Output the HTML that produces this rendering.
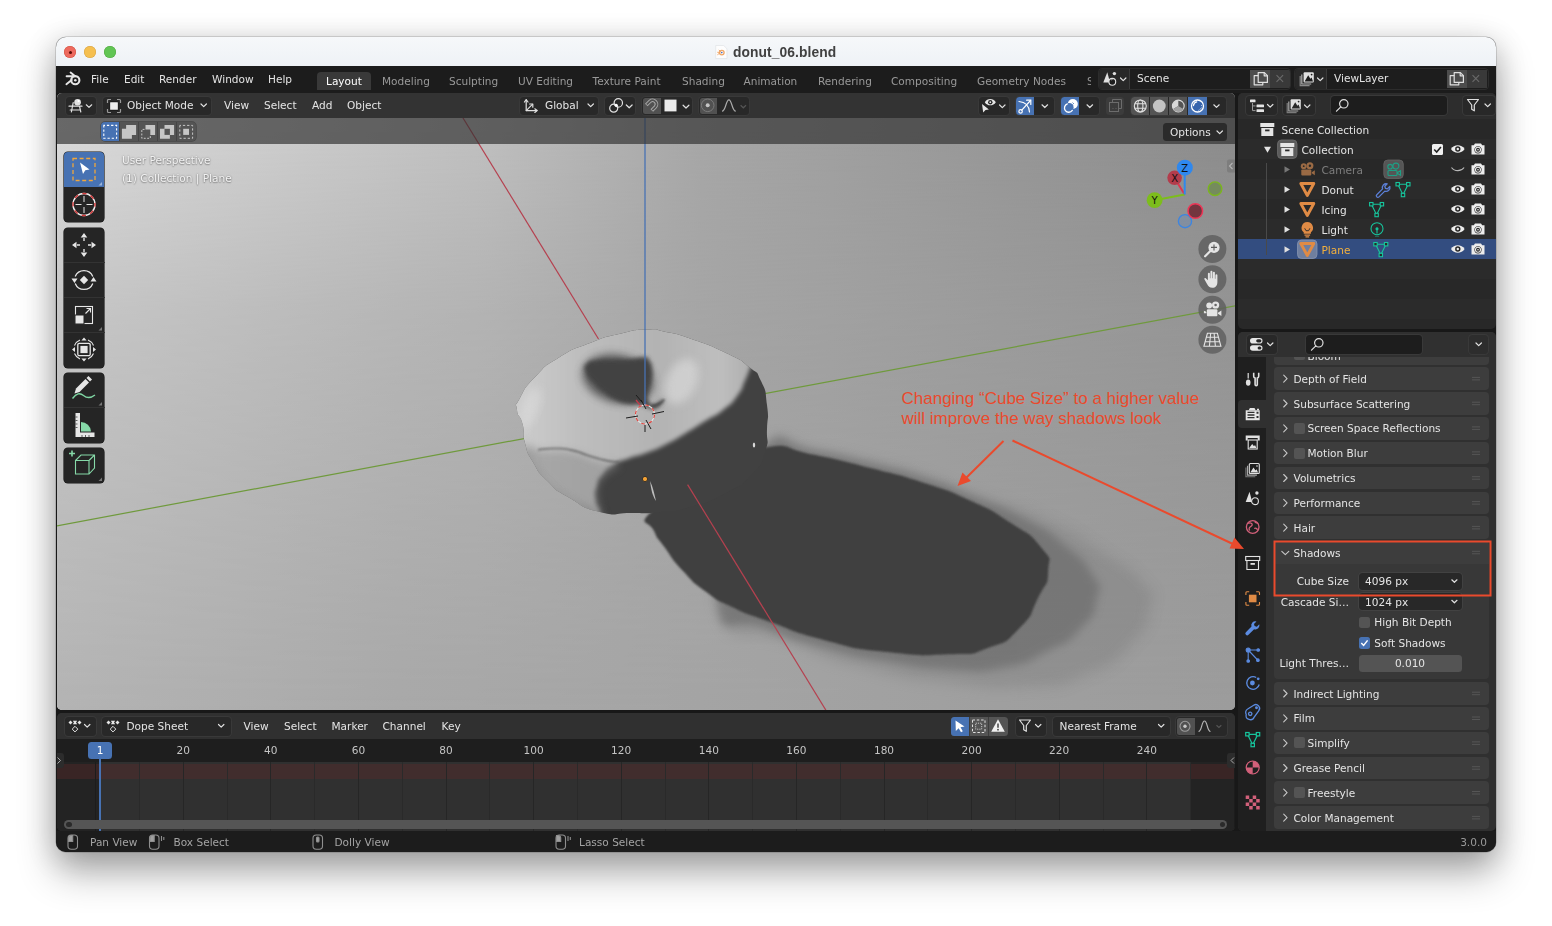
<!DOCTYPE html>
<html lang="en">
<head>
<meta charset="utf-8">
<title>donut_06.blend</title>
<style>
*{box-sizing:border-box;margin:0;padding:0}
html,body{width:1552px;height:926px;overflow:hidden;background:#fff}
body{position:relative;font-family:"DejaVu Sans","Liberation Sans",sans-serif;font-size:10.55px;color:#e4e4e4;line-height:1}
#win{position:absolute;left:56px;top:37px;width:1440px;height:815px;border-radius:10px;background:#181818;overflow:hidden}
#pg{position:absolute;left:-56px;top:-37px;width:1552px;height:926px}
#winshadow{position:absolute;left:56px;top:37px;width:1440px;height:815px;border-radius:10px;box-shadow:0 0 0 0.5px rgba(0,0,0,.26),0 21px 38px rgba(0,0,0,.30),0 5px 30px rgba(0,0,0,.19)}
#titlebar{position:absolute;left:56px;top:37px;width:1440px;height:29px;background:linear-gradient(#f6f8fa,#eef2f6)}
.tl{position:absolute;top:46px;width:12px;height:12px;border-radius:50%}
#title{position:absolute;opacity:.999;left:733px;top:44.500px;font:bold 13.8px "Liberation Sans",sans-serif;color:#404040;white-space:nowrap;letter-spacing:.1px}
.t{position:absolute;opacity:.999;white-space:nowrap;line-height:14px;height:14px;margin-top:-7px}
.dim{color:#999}
.btn{position:absolute;background:#282828;border-radius:3.5px;box-shadow:0 0 0 1px #393939}
.area{position:absolute;overflow:hidden;border-radius:5px}
svg{position:absolute;overflow:visible}
.ic{fill:none;stroke:#e0e0e0;stroke-width:1.2;stroke-linecap:round;stroke-linejoin:round}
</style>
</head>
<body>
<div id="winshadow"></div>
<div id="win"><div id="pg">
  <div id="titlebar"></div>
  <div class="tl" style="left:64px;background:#ed6a5e;box-shadow:inset 0 0 0 .5px #d1503f"></div>
  <div class="tl" style="left:68.5px;top:50.5px;width:3px;height:3px;background:#5c0d08"></div>
  <div class="tl" style="left:84px;background:#f5bf4f;box-shadow:inset 0 0 0 .5px #d6a243"></div>
  <div class="tl" style="left:104px;background:#61c554;box-shadow:inset 0 0 0 .5px #4fa73f"></div>
  <svg style="left:714.500px;top:44.500px" width="13" height="14" viewBox="0 0 13 14"><path d="M.700.500h8l3.300 3.300v9.700H.700z" fill="#fdfdfd" stroke="#dcdfe2" stroke-width=".600"/><circle cx="6.800" cy="7.600" r="2.300" fill="none" stroke="#efa566" stroke-width="1.300"/><path d="M2.300 7.300h3M3.800 5l2 1.600M2.400 9.800l2.300-1.800" stroke="#efa566" stroke-width="1" fill="none"/><circle cx="6.800" cy="7.600" r=".800" fill="#3a62b8"/></svg>
  <div id="title">donut_06.blend</div>
<!--TOPBAR-->
<div style="position:absolute;left:56px;top:66px;width:1440px;height:27px;background:#1c1c1c"></div>
<svg style="left:65px;top:71px" width="17" height="16" viewBox="0 0 17 16"><g fill="none" stroke="#e6e6e6" stroke-linecap="round"><circle cx="10.3" cy="9.2" r="4.1" stroke-width="2.1"/><path d="M1.6 5.3h7.2M5.6 1.6l4.6 3.6M1.4 13.2l5.2-4.3" stroke-width="1.9"/></g><circle cx="10.3" cy="9.2" r="1.25" fill="#e6e6e6"/></svg>
<div class="t" style="left:91px;top:78.700px">File</div>
<div class="t" style="left:124px;top:78.700px">Edit</div>
<div class="t" style="left:159px;top:78.700px">Render</div>
<div class="t" style="left:212px;top:78.700px">Window</div>
<div class="t" style="left:268px;top:78.700px">Help</div>
<div style="position:absolute;left:317px;top:72px;width:54px;height:18px;background:#393939;border-radius:4px 4px 0 0"></div>
<div class="t" style="left:326px;top:81px;color:#fff">Layout</div>
<div class="t dim" style="left:382px;top:81px">Modeling</div>
<div class="t dim" style="left:449px;top:81px">Sculpting</div>
<div class="t dim" style="left:518px;top:81px">UV Editing</div>
<div class="t dim" style="left:592.5px;top:81px">Texture Paint</div>
<div class="t dim" style="left:682px;top:81px">Shading</div>
<div class="t dim" style="left:743.5px;top:81px">Animation</div>
<div class="t dim" style="left:818px;top:81px">Rendering</div>
<div class="t dim" style="left:891px;top:81px">Compositing</div>
<div class="t dim" style="left:977px;top:81px">Geometry Nodes</div>
<div style="position:absolute;left:1087px;top:70px;width:4px;height:22px;overflow:hidden"><div class="t dim" style="left:0;top:11px">Scripting</div></div>
<!-- scene selector -->
<div class="btn" style="left:1098.5px;top:69px;width:191.5px;height:20px;background:#1d1d1d;overflow:hidden;box-shadow:0 0 0 1px #2c2c2c">
  <div style="position:absolute;left:0;top:0;width:31px;height:20px;background:#282828;border-right:1px solid #3a3a3a"></div>
  <div style="position:absolute;left:151px;top:1px;width:20px;height:18px;background:#4d4d4d"></div>
  <div style="position:absolute;left:171px;top:1px;width:20px;height:18px;background:#393939"></div>
</div>
<svg style="left:1102px;top:71px" width="27" height="16" viewBox="0 0 27 16"><path d="M5.3 1.2L8 11.5H1.3z" fill="#e0e0e0"/><circle cx="12.4" cy="2.6" r="1.7" fill="#e0e0e0"/><circle cx="10.3" cy="10.8" r="3.4" fill="#1d1d1d" stroke="#e0e0e0" stroke-width="1.1"/><path d="M9 9.3a2 2 0 0 1 1.6-.8" stroke="#e0e0e0" stroke-width=".7" fill="none"/><path d="M18.5 7l2.7 2.6L23.9 7" class="ic" stroke-width="1.3"/></svg>
<div class="t" style="left:1137px;top:78px">Scene</div>
<svg style="left:1252px;top:71px" width="40" height="16" viewBox="0 0 40 16"><g class="ic" stroke-width="1.1" stroke="#d4d4d4"><path d="M6.2 4.2V1.6h6.2l3 3v6.8H6.2z"/><path d="M12.2 1.8v3h3"/><path d="M6 4.6H2.2v9.2h8.6v-2.2"/></g><path d="M24.5 4.2l6.6 6.6M31.1 4.2l-6.6 6.6" stroke="#6a6a6a" stroke-width="1.1" fill="none"/></svg>
<!-- viewlayer selector -->
<div class="btn" style="left:1295px;top:69px;width:192.500px;height:20px;background:#1d1d1d;overflow:hidden;box-shadow:0 0 0 1px #2c2c2c">
  <div style="position:absolute;left:0;top:0;width:32px;height:20px;background:#282828;border-right:1px solid #3a3a3a"></div>
  <div style="position:absolute;left:151.500px;top:1px;width:20.300px;height:18px;background:#4d4d4d"></div>
  <div style="position:absolute;left:171.800px;top:1px;width:20px;height:18px;background:#393939"></div>
</div>
<svg id="vlicon" style="left:1299px;top:71px" width="27" height="16" viewBox="0 0 27 16"><path d="M1.2 5v9.6h9.4" fill="none" stroke="#8a8a8a" stroke-width="1.2"/><path d="M2.8 3.4v9.6h9.4" fill="none" stroke="#b0b0b0" stroke-width="1.2"/><rect x="4.6" y="1.2" width="10.2" height="10.2" rx="1" fill="#e0e0e0"/><path d="M5.6 10.4l3.6-6.2 2.2 3.6 1.2-1.4 1.4 4z" fill="#1d1d1d"/><circle cx="12.6" cy="3.6" r=".9" fill="#1d1d1d"/><path d="M18.5 7l2.7 2.6L23.9 7" class="ic" stroke-width="1.3"/></svg>
<div class="t" style="left:1334px;top:78px">ViewLayer</div>
<svg style="left:1448px;top:71px" width="40" height="16" viewBox="0 0 40 16"><g class="ic" stroke-width="1.1" stroke="#d4d4d4"><path d="M6.2 4.2V1.6h6.2l3 3v6.8H6.2z"/><path d="M12.2 1.8v3h3"/><path d="M6 4.6H2.2v9.2h8.6v-2.2"/></g><path d="M24.5 4.2l6.6 6.6M31.1 4.2l-6.6 6.6" stroke="#6a6a6a" stroke-width="1.1" fill="none"/></svg>
<!--SCENE-->
<div class="area" style="left:57px;top:93px;width:1178px;height:617px;background:#a8a8a8">
<svg style="left:-57px;top:-93px" width="1552" height="926" viewBox="0 0 1552 926">
<defs>
<linearGradient id="gA" gradientUnits="userSpaceOnUse" x1="56" y1="0" x2="1236" y2="0"><stop offset="0" stop-color="#dbdbdb"/><stop offset=".063" stop-color="#d6d6d6"/><stop offset=".368" stop-color="#bfbfbf"/><stop offset=".546" stop-color="#a7a7a7"/><stop offset=".8" stop-color="#979797"/><stop offset="1" stop-color="#8c8c8c"/></linearGradient>
<linearGradient id="gB" gradientUnits="userSpaceOnUse" x1="56" y1="0" x2="1236" y2="0"><stop offset="0" stop-color="#b3b3b3"/><stop offset=".29" stop-color="#a8a8a8"/><stop offset=".546" stop-color="#a4a4a4"/><stop offset=".8" stop-color="#9f9f9f"/><stop offset="1" stop-color="#9c9c9c"/></linearGradient>
<linearGradient id="gM" gradientUnits="userSpaceOnUse" x1="0" y1="130" x2="0" y2="712"><stop offset="0" stop-color="#000"/><stop offset=".31" stop-color="#808080"/><stop offset="1" stop-color="#fff"/></linearGradient>
<mask id="mB" maskUnits="userSpaceOnUse" x="56" y="93" width="1180" height="620"><rect x="56" y="93" width="1180" height="620" fill="url(#gM)"/></mask>
<linearGradient id="gLit" gradientUnits="userSpaceOnUse" x1="520" y1="400" x2="770" y2="400"><stop offset="0" stop-color="#cccccc"/><stop offset=".25" stop-color="#bdbdbd"/><stop offset=".55" stop-color="#b3b3b3"/><stop offset=".8" stop-color="#bebebe"/><stop offset="1" stop-color="#a6a6a6"/></linearGradient>
<radialGradient id="gHole" gradientUnits="userSpaceOnUse" cx="640" cy="385" r="70"><stop offset="0" stop-color="#3c3c3c"/><stop offset=".55" stop-color="#444"/><stop offset=".8" stop-color="#444" stop-opacity=".6"/><stop offset="1" stop-color="#444" stop-opacity="0"/></radialGradient>
<filter id="b1" x="-20%" y="-20%" width="140%" height="140%"><feGaussianBlur stdDeviation="1"/></filter>
<filter id="b2" x="-20%" y="-20%" width="140%" height="140%"><feGaussianBlur stdDeviation="2.2"/></filter>
<filter id="b4" x="-20%" y="-20%" width="140%" height="140%"><feGaussianBlur stdDeviation="4"/></filter>
<filter id="b8" x="-20%" y="-20%" width="140%" height="140%"><feGaussianBlur stdDeviation="7"/></filter>
<clipPath id="cDonut"><path d="M647.0 329.5C662.7 328.8 651.7 329.0 666.0 332.0C680.3 335.0 670.0 331.5 690.0 338.5C710.0 345.5 706.3 343.5 726.0 353.0C745.7 362.5 737.3 357.7 749.0 367.0C760.7 376.3 755.0 368.3 761.0 381.0C767.0 393.7 765.0 389.0 767.0 405.0C769.0 421.0 767.7 413.3 767.0 429.0C766.3 444.7 770.0 437.0 765.0 452.0C760.0 467.0 765.0 460.3 752.0 474.0C739.0 487.7 746.7 482.0 726.0 493.0C705.3 504.0 711.7 500.7 690.0 507.0C668.3 513.3 680.7 510.0 661.0 512.0C641.3 514.0 651.3 513.0 631.0 513.0C610.7 513.0 620.7 517.1 600.0 512.0C579.3 506.9 586.5 507.9 569.0 497.6C551.5 487.3 559.5 492.9 547.5 481.0C535.5 469.1 540.5 474.7 533.0 462.0C525.5 449.3 528.5 455.7 525.0 443.0C521.5 430.3 525.3 435.0 522.6 424.0C519.9 413.0 517.9 418.7 517.0 410.0C516.1 401.3 513.8 409.2 520.0 398.0C526.2 386.8 522.6 390.0 535.6 376.5C548.6 363.0 540.9 368.7 559.0 357.5C577.1 346.3 570.0 350.8 590.0 343.0C610.0 335.2 600.0 338.5 619.0 334.0C638.0 329.5 631.3 330.2 647.0 329.5Z"/></clipPath>
</defs>
<rect x="56" y="93" width="1180" height="618" fill="url(#gA)"/>
<rect x="56" y="93" width="1180" height="618" fill="url(#gB)" mask="url(#mB)"/>
<path d="M756.0 497.3C772.8 443.2 748.3 459.2 767.6 443.2C786.9 427.2 779.2 443.2 814.0 449.4C848.8 455.6 834.6 452.8 872.0 461.8C909.4 470.8 892.6 465.8 926.1 476.4C959.6 487.0 932.6 479.1 972.5 493.5C1012.4 507.9 1002.1 499.7 1045.9 519.7C1089.7 539.7 1071.7 532.5 1103.9 553.4C1136.1 574.3 1127.1 565.0 1142.6 582.4C1158.1 599.8 1154.2 585.0 1150.3 605.6C1146.4 626.2 1152.9 621.0 1131.0 644.2C1109.1 667.4 1119.4 661.0 1084.6 675.2C1049.8 689.4 1071.7 684.1 1026.6 686.7C981.5 689.3 1000.8 688.7 949.3 682.9C897.8 677.1 923.6 682.3 872.0 669.4C820.4 656.5 846.2 665.5 794.6 644.2C743.0 622.9 730.2 654.6 717.3 605.6C704.4 556.6 739.2 551.4 756.0 497.3Z" fill="#6c6c6c" opacity=".28" filter="url(#b8)"/>
<path d="M756.0 497.3C772.8 444.5 748.3 458.9 767.6 443.2C786.9 427.5 779.2 443.5 814.0 450.2C848.8 456.9 834.6 454.0 872.0 463.3C909.4 472.6 892.6 467.2 926.1 478.0C959.6 488.8 939.0 481.9 972.5 495.8C1006.0 509.7 995.7 503.1 1026.6 519.7C1057.5 536.3 1043.4 527.3 1065.3 545.6C1087.2 563.9 1081.7 557.2 1092.3 574.6C1102.9 592.0 1100.9 579.7 1097.0 597.8C1093.1 615.9 1097.7 610.7 1080.7 628.8C1063.7 646.9 1071.7 639.1 1045.9 652.0C1020.1 664.9 1035.6 661.6 1003.4 667.4C971.2 673.2 988.0 671.3 949.3 669.4C910.6 667.5 928.6 668.7 887.4 661.6C846.2 654.5 865.5 659.0 825.6 648.1C785.7 637.2 803.7 644.3 767.6 628.8C731.5 613.3 721.2 645.5 717.3 601.7C713.4 557.9 739.2 550.1 756.0 497.3Z" fill="#5a5a5a" opacity=".45" filter="url(#b4)"/>
<path d="M649.0 514.0C638.2 525.2 648.9 520.0 654.0 531.0C659.1 542.0 654.7 533.7 664.4 547.0C674.1 560.3 669.0 556.0 683.0 571.0C697.0 586.0 690.0 580.0 706.3 592.0C722.6 604.0 711.6 597.3 732.0 607.0C752.4 616.7 736.4 609.9 767.6 621.0C798.8 632.1 785.7 630.1 825.6 640.4C865.5 650.7 846.2 647.4 887.4 652.0C928.6 656.6 915.8 655.6 949.3 654.3C982.8 653.0 964.7 656.6 987.9 648.1C1011.1 639.6 1002.1 645.6 1018.9 628.8C1035.7 612.0 1028.4 617.1 1038.2 597.8C1048.0 578.5 1047.4 587.8 1048.2 570.8C1049.0 553.8 1053.5 563.0 1040.5 546.8C1027.5 530.6 1032.5 537.4 1009.2 522.1C985.9 506.8 998.9 513.8 970.5 500.8C942.1 487.8 957.2 493.8 924.1 483.0C891.0 472.2 907.9 477.7 871.2 468.3C834.5 458.9 848.5 461.9 814.0 454.8C779.5 447.7 793.4 443.2 767.6 447.1C741.8 451.0 763.7 449.7 736.6 466.4C709.5 483.1 715.6 481.4 686.4 497.3C657.2 513.2 659.8 502.8 649.0 514.0Z" fill="#404040" filter="url(#b1)"/>
<line x1="56" y1="526" x2="1236" y2="305.6" stroke="#6f9a3c" stroke-width="1.2"/>
<line x1="447.7" y1="93" x2="598.5" y2="339" stroke="#b5404f" stroke-width="1.2"/>
<line x1="645" y1="93" x2="645" y2="410" stroke="#4772b3" stroke-width="1.3"/>
<path d="M647.0 329.5C662.7 328.8 651.7 329.0 666.0 332.0C680.3 335.0 670.0 331.5 690.0 338.5C710.0 345.5 706.3 343.5 726.0 353.0C745.7 362.5 737.3 357.7 749.0 367.0C760.7 376.3 755.0 368.3 761.0 381.0C767.0 393.7 765.0 389.0 767.0 405.0C769.0 421.0 767.7 413.3 767.0 429.0C766.3 444.7 770.0 437.0 765.0 452.0C760.0 467.0 765.0 460.3 752.0 474.0C739.0 487.7 746.7 482.0 726.0 493.0C705.3 504.0 711.7 500.7 690.0 507.0C668.3 513.3 680.7 510.0 661.0 512.0C641.3 514.0 651.3 513.0 631.0 513.0C610.7 513.0 620.7 517.1 600.0 512.0C579.3 506.9 586.5 507.9 569.0 497.6C551.5 487.3 559.5 492.9 547.5 481.0C535.5 469.1 540.5 474.7 533.0 462.0C525.5 449.3 528.5 455.7 525.0 443.0C521.5 430.3 525.3 435.0 522.6 424.0C519.9 413.0 517.9 418.7 517.0 410.0C516.1 401.3 513.8 409.2 520.0 398.0C526.2 386.8 522.6 390.0 535.6 376.5C548.6 363.0 540.9 368.7 559.0 357.5C577.1 346.3 570.0 350.8 590.0 343.0C610.0 335.2 600.0 338.5 619.0 334.0C638.0 329.5 631.3 330.2 647.0 329.5Z" fill="#414141"/>
<g clip-path="url(#cDonut)">
<path d="M756.0 352.0C754.0 357.5 753.7 358.7 749.9 368.4C746.1 378.2 748.8 372.2 744.7 381.3C740.5 390.3 744.7 386.0 737.5 395.5C730.4 405.0 734.4 401.1 723.3 409.8C712.2 418.5 716.9 413.7 704.3 421.6C691.6 429.6 697.9 426.0 685.3 433.5C672.6 441.0 678.9 437.9 666.3 444.2C653.6 450.5 659.9 447.8 647.3 452.5C634.6 457.3 639.4 454.5 628.3 458.5C617.2 462.4 622.7 459.2 614.0 464.4C605.3 469.5 608.1 466.8 602.1 473.9C596.2 481.0 598.6 477.1 596.2 485.8C593.8 494.5 594.0 491.3 595.0 500.0C596.0 508.7 597.3 504.0 599.3 511.9C601.3 519.8 600.4 519.8 601.0 523.8L599 560L480 560L480 300L790 300Z" fill="url(#gLit)" filter="url(#b2)"/>
<path d="M523.8 443.0C526.9 439.1 524.5 447.0 540.4 450.1C556.2 453.3 551.5 448.6 571.3 452.5C591.1 456.5 583.9 458.1 599.8 462.0C615.6 466.0 617.2 459.6 618.8 464.4C620.3 469.1 611.6 467.6 604.5 476.3C597.4 485.0 599.8 477.9 597.4 490.5C595.0 503.2 606.1 510.3 597.4 514.3C588.7 518.2 587.9 512.7 571.3 502.4C554.6 492.1 561.0 496.9 547.5 483.4C534.0 469.9 538.8 475.5 530.9 462.0C523.0 448.6 520.6 447.0 523.8 443.0Z" fill="#8c8c8c" opacity=".55" filter="url(#b4)"/>
<path d="M522.6 452.5C526.9 460.4 524.9 462.0 535.6 476.3C546.3 490.5 540.4 484.2 554.6 495.3C568.9 506.4 562.5 502.0 578.4 509.5C594.2 517.0 594.2 515.1 602.1 517.8" fill="none" stroke="#707070" stroke-width="11" opacity=".55" filter="url(#b4)"/>
<path d="M538.0 449.7C543.5 449.3 543.5 448.3 554.6 448.5C565.7 448.6 560.2 447.8 571.3 450.1C582.3 452.4 576.8 452.0 587.9 455.4C599.0 458.7 594.2 457.9 604.5 460.1C614.8 462.3 614.0 461.4 618.8 462.0" fill="none" stroke="#555" stroke-width="1.6" opacity=".8" filter="url(#b1)"/>
<ellipse cx="617.6" cy="379.4" rx="36" ry="24" fill="#454545" filter="url(#b4)" opacity=".8" transform="rotate(14 620 380)"/>
<path d="M644.4 357.3C651.2 357.8 646.7 356.6 649.3 360.7C651.9 364.7 651.5 363.0 652.2 369.4C652.9 375.9 652.7 372.7 651.4 380.1C650.1 387.6 649.3 385.0 648.3 391.8C647.3 398.6 646.4 396.3 648.3 400.5C650.3 404.7 649.1 404.9 654.1 404.4C659.2 403.9 662.1 398.1 663.4 399.1C664.7 400.0 662.4 404.3 658.0 407.3C653.7 410.4 656.1 409.3 650.3 408.3C644.4 407.3 647.7 405.9 640.5 404.4C633.4 403.0 636.6 405.2 628.9 403.9C621.1 402.6 625.3 404.3 617.2 400.5C609.1 396.8 612.4 398.6 604.6 392.8C596.8 386.9 600.0 389.8 593.9 383.0C587.7 376.2 588.4 378.8 586.1 372.4C583.8 365.9 583.2 367.7 587.1 363.6C591.0 359.6 588.7 361.5 597.8 360.2C606.8 358.9 603.9 360.0 614.3 359.7C624.7 359.4 618.8 360.0 628.9 359.2C638.9 358.4 637.6 356.8 644.4 357.3Z" fill="#424242" filter="url(#b2)"/>
<path d="M652.2 405.9C654.1 405.4 654.1 406.4 658.0 404.4C661.9 402.5 661.9 401.5 663.9 400.0" fill="none" stroke="#454545" stroke-width="2" stroke-linecap="round" filter="url(#b1)"/>
<ellipse cx="680" cy="382" rx="15" ry="24" fill="#d6d6d6" opacity=".75" filter="url(#b4)" transform="rotate(25 682 385)"/>
<ellipse cx="530" cy="408" rx="9" ry="22" fill="#dcdcdc" opacity=".6" filter="url(#b4)" transform="rotate(20 530 408)"/>
</g>
<line x1="645" y1="329" x2="645" y2="406" stroke="#4772b3" stroke-width="1.3"/>
<line x1="687.6" y1="484.6" x2="827" y2="712" stroke="#b5404f" stroke-width="1.2"/>
<path d="M650 481c3 6 4 12 6 20c-4-6-5-13-6-20z" fill="#bdbdbd"/>
<ellipse cx="754" cy="445" rx="1.2" ry="2.6" fill="#d8d8d8"/>
<circle cx="645" cy="479" r="2.6" fill="#f5a234" stroke="#2a2a2a" stroke-width=".9"/>
<!-- 3d cursor -->
<g fill="none">
<circle cx="645" cy="414.5" r="9.5" stroke="#e9e9e9" stroke-width="1.1"/>
<circle cx="645" cy="414.5" r="9.5" stroke="#e0433e" stroke-width="1.1" stroke-dasharray="3.7 3.76"/>
<path d="M626 418l12-2M652 414l12-2.5M641 400l5 9M646 420l5 9M645 425v7M636 395l6 7" stroke="#1c1c1c" stroke-width="1"/>
<path d="M636 400l4 5" stroke="#c23b4a" stroke-width="1.3"/>
</g>
</svg>
<!--VIEWPORT HEADER (inside .area, coords via inner offset)-->
<div style="position:absolute;left:-57px;top:-93px;width:1552px;height:926px">
<div style="position:absolute;left:56px;top:93px;width:1180px;height:25px;background:#333"></div>
<div style="position:absolute;left:56px;top:118px;width:1180px;height:26px;background:rgba(48,48,48,.68)"></div>
<!-- editor type -->
<div class="btn" style="left:65.5px;top:96.5px;width:30px;height:18px"></div>
<svg style="left:68px;top:98px" width="27" height="15" viewBox="0 0 27 15"><g class="ic" stroke-width="1.1"><path d="M1 8.2h13M2.2 12h10M5.2 4.5L3.4 14M11.5 8.2l1.3 5.8"/></g><circle cx="9.6" cy="4.2" r="3.3" fill="#e0e0e0"/><circle cx="10.6" cy="3.1" r="1.1" fill="#fff"/><path d="M18.3 6.8l2.7 2.6 2.7-2.6" class="ic" stroke-width="1.3"/></svg>
<!-- object mode -->
<div class="btn" style="left:102.5px;top:96.5px;width:108px;height:18px"></div>
<svg style="left:106px;top:97.5px" width="16" height="16" viewBox="0 0 16 16"><path d="M1.500 5V2.500a1 1 0 0 1 1-1H5M11 1.500h2.500a1 1 0 0 1 1 1V5M14.500 11v2.500a1 1 0 0 1-1 1H11M5 14.500H2.500a1 1 0 0 1-1-1V11" fill="none" stroke="#9a9a9a" stroke-width="1.200"/><rect x="3.600" y="3.600" width="8.800" height="8.800" rx="1" fill="#ececec" stroke="#1c1c1c" stroke-width="1.100"/></svg>
<div class="t" style="left:127px;top:105px">Object Mode</div>
<svg style="left:200px;top:103px" width="8" height="5" viewBox="0 0 8 5"><path d="M1 1l2.7 2.6L6.4 1" class="ic" stroke-width="1.3"/></svg>
<div class="t" style="left:224px;top:105px">View</div>
<div class="t" style="left:264px;top:105px">Select</div>
<div class="t" style="left:312px;top:105px">Add</div>
<div class="t" style="left:347px;top:105px">Object</div>
<!-- global -->
<div class="btn" style="left:520px;top:96.5px;width:77.5px;height:18px"></div>
<svg style="left:523px;top:97.5px" width="16" height="16" viewBox="0 0 16 16"><g class="ic" stroke-width="1.1"><path d="M3.2 2v10.6h10.6"/><path d="M1.4 4l1.8-2.4L5 4M11.8 10.8l2.4 1.8-2.4 1.8"/><path d="M3.2 12.6l6.2-6.2"/><path d="M6.6 6h3.2v3.2"/></g></svg>
<div class="t" style="left:545px;top:105px">Global</div>
<svg style="left:587px;top:103px" width="8" height="5" viewBox="0 0 8 5"><path d="M1 1l2.7 2.6L6.4 1" class="ic" stroke-width="1.3"/></svg>
<!-- pivot -->
<div class="btn" style="left:605px;top:96.5px;width:30px;height:18px"></div>
<svg style="left:608px;top:98px" width="26" height="15" viewBox="0 0 26 15"><g class="ic" stroke-width="1.200"><circle cx="10.300" cy="4.900" r="4.200"/><circle cx="5.700" cy="10.200" r="4"/></g><circle cx="8.300" cy="7.300" r="1.500" fill="#fff"/><path d="M18.300 7l2.900 2.800 2.900-2.800" class="ic" stroke-width="1.300"/></svg>
<!-- snap -->
<div class="btn" style="left:642px;top:96.5px;width:50px;height:18px;overflow:hidden"><div style="position:absolute;left:1px;top:1px;width:17.5px;height:16px;background:#515151;border-radius:2.5px 0 0 2.5px"></div></div>
<svg style="left:644px;top:98px" width="48" height="15" viewBox="0 0 48 15"><path d="M2.300 7L6 3.300a3.900 3.900 0 0 1 5.500 5.500L7.800 12.500" fill="none" stroke="#a6a6a6" stroke-width="3.700"/><path d="M2.800 6.500L6 3.300a3.900 3.900 0 0 1 5.500 5.500L8.300 12" fill="none" stroke="#515151" stroke-width="1.700"/><rect x="20.500" y="1.600" width="12" height="11.800" fill="#ececec"/><path d="M39.100 7.200l2.900 2.800 2.900-2.800" class="ic" stroke-width="1.300"/></svg>
<!-- proportional -->
<div class="btn" style="left:698.5px;top:96.5px;width:50px;height:18px;overflow:hidden"><div style="position:absolute;left:1px;top:1px;width:17.5px;height:16px;background:#515151;border-radius:2.5px 0 0 2.5px"></div></div>
<svg style="left:700px;top:98px" width="48" height="15" viewBox="0 0 48 15"><circle cx="7.700" cy="7.300" r="6.300" fill="none" stroke="#7a7a7a" stroke-width="1"/><circle cx="7.700" cy="7.300" r="2" fill="#c4c4c4"/><path d="M22 13.200c4 0 3.700-11.400 6.900-11.400s2.900 11.400 6.900 11.400" fill="none" stroke="#aaa" stroke-width="1.200"/><path d="M40.600 7.200l2.700 2.600 2.700-2.600" fill="none" stroke="#555" stroke-width="1.200"/></svg>
<!-- visibility -->
<div class="btn" style="left:979px;top:96.5px;width:30px;height:18px"></div>
<svg style="left:980px;top:97px" width="28" height="17" viewBox="0 0 28 17"><path d="M4.800 5.200c2.500-4.200 8.500-4.200 11 0c-2.500 4.200-8.500 4.200-11 0z" fill="#e6e6e6"/><circle cx="10.300" cy="5.200" r="2.200" fill="#282828"/><circle cx="10.300" cy="5.200" r=".900" fill="#e6e6e6"/><path d="M2 7l1.200 8.600 2.300-2.600 3.400-.6z" fill="#e6e6e6"/><path d="M19.600 8l2.700 2.600L25 8" class="ic" stroke-width="1.300"/></svg>
<!-- gizmo -->
<div class="btn" style="left:1016px;top:96.5px;width:38px;height:18px;overflow:hidden"><div style="position:absolute;left:0;top:0;width:17.700px;height:18px;background:#4772b3"></div></div>
<svg style="left:1016.500px;top:97.500px" width="36" height="16" viewBox="0 0 36 16"><g fill="none" stroke="#fff" stroke-width="1.200" stroke-linecap="round"><path d="M2 3.500c6 .5 10 4.500 10.500 10.500"/><path d="M4.800 12.200L13.500 2.500"/><path d="M9.600 2.200h4.200v4.200"/><circle cx="3.600" cy="13.400" r="1.700"/></g><path d="M25 6.800l2.800 2.700 2.800-2.700" class="ic" stroke-width="1.300"/></svg>
<!-- overlay -->
<div class="btn" style="left:1061px;top:96.500px;width:38px;height:18px;overflow:hidden"><div style="position:absolute;left:0;top:0;width:17.700px;height:18px;background:#4772b3"></div></div>
<svg style="left:1061.500px;top:97.500px" width="36" height="16" viewBox="0 0 36 16"><circle cx="10.800" cy="6" r="5" fill="#fff"/><circle cx="7" cy="9.600" r="4.600" fill="#4772b3"/><path d="M10.300 12.400a4.300 4.300 0 1 1-5-6.500" fill="none" stroke="#fff" stroke-width="1.300" stroke-linecap="round"/><path d="M9 5.500l2 2M10.500 4.500l1.500 1.500" stroke="#4772b3" stroke-width=".800"/><path d="M25 6.800l2.800 2.700 2.800-2.700" class="ic" stroke-width="1.300"/></svg>
<!-- xray -->
<div class="btn" style="left:1106px;top:96.500px;width:17.500px;height:18px;background:#3c3c3c;box-shadow:none"></div>
<svg style="left:1107.500px;top:98px" width="15" height="15" viewBox="0 0 15 15"><g fill="none" stroke="#6c6c6c" stroke-width="1"><rect x="1.500" y="4.500" width="9" height="9"/><path d="M4.500 4.500v-3h9v9h-3"/><path d="M4.500 10.500h1M7.500 10.500h1" stroke-width=".8"/></g></svg>
<!-- shading -->
<div style="position:absolute;left:1130.500px;top:96.500px;width:95.500px;height:18px;border-radius:3.500px;overflow:hidden;background:#282828;box-shadow:0 0 0 1px #393939">
  <div style="position:absolute;left:0;top:0;width:18.500px;height:18px;background:#545454"></div>
  <div style="position:absolute;left:19px;top:0;width:18.500px;height:18px;background:#545454"></div>
  <div style="position:absolute;left:38px;top:0;width:18.500px;height:18px;background:#545454"></div>
  <div style="position:absolute;left:57px;top:0;width:19px;height:18px;background:#4772b3"></div>
</div>
<svg style="left:1130.500px;top:96.500px" width="96" height="18" viewBox="0 0 96 18"><g fill="none" stroke="#e0e0e0" stroke-width="1.100"><circle cx="9.300" cy="9" r="6"/><ellipse cx="9.300" cy="9" rx="2.600" ry="6"/><path d="M3.800 6.700h11M3.800 11.300h11"/></g><circle cx="28.300" cy="9" r="6.400" fill="#c4c4c4"/><circle cx="47.300" cy="9" r="5.900" fill="none" stroke="#d8d8d8" stroke-width="1.100"/><path d="M47.300 9V3.100a5.900 5.900 0 0 0-5.100 8.800z" fill="#d8d8d8"/><path d="M47.300 9l5 3.100a5.900 5.900 0 0 1-10.100-.2z" fill="#a0a0a0"/><circle cx="66.500" cy="9" r="6" fill="#3765ad" stroke="#fff" stroke-width="1.300"/><path d="M62.500 8.500a4.200 4.200 0 0 1 3.200-3.600" stroke="#fff" stroke-width="1.300" fill="none" stroke-linecap="round"/><path d="M70.500 10.500l-1.300 2M68.300 12.500l-.8 1.300M71 8l-1 1" stroke="#dfe8f5" stroke-width=".7"/><path d="M82.800 7.800l2.700 2.600 2.700-2.600" class="ic" stroke-width="1.300"/></svg>
<!-- tool settings row -->
<div style="position:absolute;left:100.900px;top:122.300px;width:94.700px;height:19px;border-radius:4px;overflow:hidden;background:#545454;box-shadow:0 0 0 .7px #464646">
  <div style="position:absolute;left:0;top:0;width:18.500px;height:19px;background:#4772b3"></div>
  <div style="position:absolute;left:18.300px;top:0;width:.700px;height:19px;background:#444"></div>
  <div style="position:absolute;left:37.300px;top:0;width:.700px;height:19px;background:#444"></div>
  <div style="position:absolute;left:56.300px;top:0;width:.700px;height:19px;background:#444"></div>
  <div style="position:absolute;left:75.300px;top:0;width:.700px;height:19px;background:#444"></div>
</div>
<svg style="left:100.900px;top:122.300px" width="95" height="19" viewBox="0 0 95 19"><rect x="2.800" y="3.400" width="12.800" height="12.900" fill="none" stroke="#fff" stroke-width="1.100" stroke-dasharray="2.300 1.900" stroke-dashoffset="1.100"/><path d="M25.100 2.900h10v10h-4.200v3.900h-10v-10h4.200z" fill="#c6c6c6"/><path d="M44.500 2.900h9.600v10h-4.800v-5.500h-4.800z" fill="#c6c6c6"/><path d="M43.500 7.400h-2.700v8.900h8.500v-2.400" fill="none" stroke="#c6c6c6" stroke-width="1" stroke-dasharray="1.900 1.500"/><path d="M63.500 2.900h9.600v10h-4.200v3.900h-9.900v-10h4.500z" fill="#c6c6c6"/><rect x="63.500" y="6.800" width="5.400" height="6.100" fill="#545454"/><rect x="78.800" y="3.400" width="12.800" height="12.900" fill="none" stroke="#c6c6c6" stroke-width="1" stroke-dasharray="2.300 1.900" stroke-dashoffset="1.100"/><rect x="82.200" y="6.800" width="5.800" height="6.100" fill="#c6c6c6"/></svg>
<!-- options -->
<div style="position:absolute;left:1163px;top:122.500px;width:63.500px;height:18.500px;background:#2b2b2b;border-radius:3.500px"></div>
<div class="t" style="left:1170px;top:131.500px">Options</div>
<svg style="left:1216px;top:130px" width="8" height="5" viewBox="0 0 8 5"><path d="M1 1l2.700 2.600L6.400 1" class="ic" stroke-width="1.300"/></svg>
<!--VIEWPORT overlay text-->
<div class="t" style="left:122px;top:160px;color:#f2f2f2;text-shadow:0 0 2px rgba(0,0,0,.42),0 1px 1.500px rgba(0,0,0,.3)">User Perspective</div>
<div class="t" style="left:122px;top:178px;color:#f2f2f2;text-shadow:0 0 2px rgba(0,0,0,.42),0 1px 1.500px rgba(0,0,0,.3)">(1) Collection | Plane</div>
<!--TOOLBAR-->
<div style="position:absolute;left:64.300px;top:152.400px;width:39.800px;height:69.800px;background:#252525;border-radius:4px;box-shadow:0 0 0 .6px #161616;overflow:hidden"><div style="position:absolute;left:0;top:0;width:41px;height:35px;background:#4772b3"></div></div>
<div style="position:absolute;left:64.300px;top:227.500px;width:39.800px;height:140px;background:#252525;border-radius:4px;box-shadow:0 0 0 .6px #161616"><div style="position:absolute;left:0;top:34.500px;width:41px;height:.800px;background:#333"></div><div style="position:absolute;left:0;top:69.500px;width:41px;height:.800px;background:#333"></div><div style="position:absolute;left:0;top:104.500px;width:41px;height:.800px;background:#333"></div></div>
<div style="position:absolute;left:64.300px;top:372.500px;width:39.800px;height:70px;background:#252525;border-radius:4px;box-shadow:0 0 0 .6px #161616"><div style="position:absolute;left:0;top:34.500px;width:41px;height:.800px;background:#333"></div></div>
<div style="position:absolute;left:64.300px;top:448px;width:39.800px;height:34.500px;background:#252525;border-radius:4px;box-shadow:0 0 0 .6px #161616"></div>
<svg style="left:64px;top:152px" width="41" height="331" viewBox="0 0 41 331">
<!-- select box -->
<rect x="9" y="6.500" width="22" height="22" fill="none" stroke="#f0a63c" stroke-width="1.300" stroke-dasharray="4 2.600"/>
<path d="M16 10.500l9.500 7-4.200.700-2.300 3.800z" fill="#fff"/>
<path d="M38 30v3.500h-3.500z" fill="#9bb3da"/>
<!-- cursor -->
<circle cx="20" cy="52.500" r="11" fill="none" stroke="#f0f0f0" stroke-width="1.400"/>
<circle cx="20" cy="52.500" r="11" fill="none" stroke="#d2393a" stroke-width="1.400" stroke-dasharray="4.320 4.320" stroke-dashoffset="2.100"/>
<path d="M20 44v6M20 55v6M11.500 52.500h6M22.500 52.500h6" stroke="#e6e6e6" stroke-width="1"/>
<!-- move -->
<g transform="translate(20 93)" fill="#e6e6e6" stroke="none"><path d="M0-12l3.300 4.500h-6.600zM0 12l3.300-4.500h-6.600zM-12 0l4.500-3.300v6.600zM12 0l-4.500-3.300v6.600z"/><path d="M-.700-7h1.400v3h-1.400zM-.700 4h1.400v3h-1.400zM-7-.700h3v1.400h-3zM4-.700h3v1.400h-3z"/></g>
<!-- rotate -->
<g transform="translate(20 128)"><path d="M-8.800-3.500a9.500 9.500 0 0 1 17.600 0M8.800 3.500a9.500 9.500 0 0 1-17.600 0" fill="none" stroke="#e6e6e6" stroke-width="1.300"/><path d="M-12.500-1.500h6l-3 4.500zM12.500 1.500h-6l3-4.500z" fill="#e6e6e6"/><path d="M0-4.200l4.200 4.200-4.200 4.200-4.200-4.200z" fill="#e6e6e6"/></g>
<!-- scale -->
<g transform="translate(20 163)"><rect x="-8.500" y="-8.500" width="17" height="17" fill="none" stroke="#e6e6e6" stroke-width="1.100"/><rect x="-9" y="0" width="9" height="9" fill="#e6e6e6" stroke="#252525" stroke-width="1"/><path d="M1.500-1.500l5-5M2.500-6.500h4v4" fill="none" stroke="#e6e6e6" stroke-width="1.100"/><path d="M18 12v3.500h-3.500z" fill="#777"/></g>
<!-- transform -->
<g transform="translate(20 197.500)"><path d="M-9.500-4a10.300 10.300 0 0 1 5.500-5.500M4-9.500a10.300 10.300 0 0 1 5.500 5.500M9.500 4a10.300 10.300 0 0 1-5.500 5.500M-4 9.500a10.300 10.300 0 0 1-5.500-5.500" fill="none" stroke="#e6e6e6" stroke-width="1.100"/><rect x="-6.200" y="-6.200" width="12.400" height="12.400" rx="1.500" fill="none" stroke="#e6e6e6" stroke-width="1.300"/><rect x="-3.600" y="-3.600" width="7.200" height="7.200" fill="#e6e6e6"/><path d="M0-12l2.600 3h-5.200zM0 12l2.600-3h-5.200zM-12 0l3-2.600v5.200zM12 0l-3-2.600v5.200z" fill="#e6e6e6"/></g>
<!-- annotate -->
<g transform="translate(20 238)"><path d="M-11.500 8.500c4-5.500 7.500-6 11-3s7 3 11.500-.500" fill="none" stroke="#7fd6a3" stroke-width="1.400"/><path d="M-9.500 3.500l1.500-5 9.500-9.500 3.500 3.500-9.500 9.500z" fill="#e6e6e6"/><path d="M2.500-12l2-2 3.500 3.500-2 2z" fill="#e6e6e6"/><path d="M18 12v3.500h-3.500z" fill="#777"/></g>
<!-- measure -->
<g transform="translate(20 273)"><path d="M-8.500-12h4.500v19.500h14.500v4.500h-19z" fill="#e6e6e6"/><path d="M-3 6.500v-9.500a10 10 0 0 1 10 9.500z" fill="#86d9a8"/><path d="M-8.500-8h2M-8.500-4.500h2M-8.500-1h2M-8.500 2.500h2M-2 12v-2M1.500 12v-2M5 12v-2" stroke="#252525" stroke-width=".700"/></g>
<!-- add cube -->
<g transform="translate(20 313)"><path d="M-8.500-4.500l5.500-5.500h13.500v13l-5.500 6h-13.500zM-8.500-4.500h13.500v13.500M5-4.500l5.500-5.500" fill="none" stroke="#86d9a8" stroke-width="1.100"/><path d="M-12-14.500v6M-15-11.500h6" stroke="#86d9a8" stroke-width="1.600"/><path d="M18 12.500v3.500h-3.500z" fill="#777"/></g>
</svg>
<!--NAV GIZMO-->
<svg style="left:0;top:0" width="1552" height="926" viewBox="0 0 1552 926">
<circle cx="1215" cy="188.700" r="6.800" fill="#6c8a4c" stroke="#7bb51f" stroke-width="1.400" fill-opacity=".75"/>
<circle cx="1185" cy="221.200" r="6.600" fill="#7e8ea4" stroke="#3d85e0" stroke-width="1.400" fill-opacity=".75"/>
<path d="M1184.700 194.500L1174.500 178" stroke="#e0364f" stroke-width="2"/>
<path d="M1184.700 194.500L1154.500 200.200" stroke="#7dbd1c" stroke-width="2"/>
<path d="M1184.700 194.500L1184.700 168" stroke="#2f88ee" stroke-width="2"/>
<circle cx="1174.600" cy="177.800" r="7.300" fill="#b33c4c"/>
<circle cx="1195.300" cy="211" r="7.300" fill="#73353f" stroke="#ee3657" stroke-width="1.500"/>
<circle cx="1154.600" cy="200.200" r="7.900" fill="#7dbd1c"/>
<circle cx="1184.800" cy="167.700" r="8" fill="#2f88ee"/>
<g font-family="'DejaVu Sans',sans-serif" font-size="10" fill="#101010" text-anchor="middle"><text x="1174.600" y="181.500">X</text><text x="1154.600" y="204">Y</text><text x="1184.800" y="171.500">Z</text></g>
<g fill="#5e5e5e" fill-opacity=".82"><circle cx="1212.400" cy="249" r="14"/><circle cx="1212.400" cy="279.300" r="14"/><circle cx="1212.400" cy="309.800" r="14"/><circle cx="1212.400" cy="339.800" r="14"/></g>
<!-- zoom -->
<g transform="translate(1212.400 249)"><circle cx="1.600" cy="-1.600" r="5.600" fill="#e4e4e4"/><path d="M-2.300 2.300l-5 5" stroke="#e4e4e4" stroke-width="2.200" stroke-linecap="round"/><path d="M1.600-4.600v6M-1.400-1.600h6" stroke="#5a5a5a" stroke-width="1.100"/></g>
<!-- hand -->
<g transform="translate(1212.400 279.300)" fill="#e4e4e4"><path d="M-4.500 1v-6.500a1 1 0 0 1 2 0v4.500h.500v-6.500a1 1 0 0 1 2 0v6.500h.500v-5.500a1 1 0 0 1 2 0v6h.500v-3.500a1 1 0 0 1 2 0v6.500c0 4-2 6-5 6s-4-1.500-5.500-4l-2.500-4.500c-.500-1 .800-1.800 1.600-.900z"/></g>
<!-- camera -->
<g transform="translate(1212.400 309.800)" fill="#e4e4e4"><circle cx="-3.200" cy="-4.300" r="2.900"/><circle cx="3.200" cy="-4.800" r="3.600"/><rect x="-5.500" y="-.500" width="10.500" height="7" rx="1"/><path d="M5.500 3l3.500-2.300v5.600l-3.500-2.300zM-6 3.500h-2.500v-2.500l2.500 1z"/><circle cx="3.200" cy="-4.800" r="1.300" fill="#666"/></g>
<!-- grid -->
<g transform="translate(1212.400 339.800)" fill="none" stroke="#e4e4e4" stroke-width="1.100"><path d="M-5-6.500h10l3.500 13h-17zM-1.700-6.500l-1.300 13M1.700-6.500l1.300 13M-6.200-2.500h12.400M-7.500 2h15"/></g>
<!-- sidebar toggle -->
<rect x="1227" y="159.500" width="9" height="13" rx="2" fill="#7a7a7a" fill-opacity=".85"/><path d="M1232.500 163l-3 3 3 3" fill="none" stroke="#b5b5b5" stroke-width="1.100"/>
</svg>
</div><!--/vp inner-->
</div><!--/vp area-->
<!--OUTLINER-->
<div class="area" style="left:1238px;top:93px;width:258px;height:235.500px;background:#282828">
<div style="position:absolute;left:-1238px;top:-93px;width:1552px;height:926px">
<div style="position:absolute;left:1238px;top:93px;width:258px;height:25.500px;background:#2d2d2d"></div>
<div style="position:absolute;left:1238px;top:139px;width:258px;height:20px;background:#2b2b2b"></div>
<div style="position:absolute;left:1238px;top:179px;width:258px;height:20px;background:#2b2b2b"></div>
<div style="position:absolute;left:1238px;top:219px;width:258px;height:20px;background:#2b2b2b"></div>
<div style="position:absolute;left:1238px;top:239px;width:258px;height:20px;background:#334d80"></div>
<div style="position:absolute;left:1238px;top:259px;width:258px;height:20px;background:#2b2b2b"></div>
<div style="position:absolute;left:1238px;top:299px;width:258px;height:20px;background:#2b2b2b"></div>
<div style="position:absolute;left:1266px;top:163px;width:1px;height:92px;background:#4a4a4a"></div>
<!-- header -->
<div class="btn" style="left:1246px;top:96px;width:31px;height:19px"></div>
<svg style="left:1249px;top:98px" width="27" height="16" viewBox="0 0 27 16"><g fill="#e4e4e4"><rect x="1" y="1.500" width="5.500" height="2.800" rx=".600"/><rect x="7.500" y="6.500" width="7.500" height="2.800" rx=".600"/><rect x="7.500" y="11.200" width="7.500" height="2.800" rx=".600"/></g><path d="M3.500 5v7.600h3M3.500 7.900h3" fill="none" stroke="#9a9a9a" stroke-width="1"/><path d="M18.500 6.500l2.700 2.600 2.700-2.600" class="ic" stroke-width="1.300"/></svg>
<div class="btn" style="left:1283px;top:96px;width:31.500px;height:19px"></div>
<svg style="left:1286px;top:97.500px" width="27" height="16" viewBox="0 0 27 16"><path d="M1.200 5v9.600h9.400" fill="none" stroke="#7a7a7a" stroke-width="1.200"/><path d="M2.800 3.400v9.600h9.400" fill="none" stroke="#a8a8a8" stroke-width="1.200"/><rect x="4.600" y="1.200" width="10.200" height="10.200" rx="1" fill="#e0e0e0"/><path d="M5.600 10.400l3.600-6.200 2.200 3.600 1.200-1.400 1.400 4z" fill="#282828"/><circle cx="12.600" cy="3.600" r=".900" fill="#282828"/><path d="M18.500 7l2.700 2.600L23.900 7" class="ic" stroke-width="1.300"/></svg>
<div class="btn" style="left:1331px;top:96px;width:116px;height:19px;background:#1d1d1d"></div>
<svg style="left:1335px;top:98px" width="15" height="15" viewBox="0 0 15 15"><circle cx="8.800" cy="5.800" r="4.200" class="ic" stroke-width="1.200"/><path d="M5.800 8.800L1.500 13.200" class="ic" stroke-width="1.400"/></svg>
<div class="btn" style="left:1463px;top:96px;width:32px;height:19px"></div>
<svg style="left:1466px;top:98px" width="28" height="15" viewBox="0 0 28 15"><path d="M1.500 1.500h11l-4.200 5.500v5.800l-2.600-1.600v-4.200z" class="ic" stroke-width="1.200"/><path d="M19 6l2.700 2.600 2.700-2.600" class="ic" stroke-width="1.300"/></svg>
<!-- rows text -->
<div class="t" style="left:1281.500px;top:129.500px">Scene Collection</div>
<div class="t" style="left:1301.500px;top:149.500px">Collection</div>
<div class="t" style="left:1321.500px;top:169.500px;color:#7d7d7d">Camera</div>
<div class="t" style="left:1321.500px;top:189.500px">Donut</div>
<div class="t" style="left:1321.500px;top:209.500px">Icing</div>
<div class="t" style="left:1321.500px;top:229.500px">Light</div>
<div class="t" style="left:1321.500px;top:249.500px;color:#f3b03c">Plane</div>
<svg style="left:0;top:0" width="1552" height="926" viewBox="0 0 1552 926">
<defs>
<g id="icColl"><rect x="-7" y="-6.500" width="14" height="4" fill="#e4e4e4"/><path d="M-6-1.500h12v8h-12z" fill="#e4e4e4"/><rect x="-2.200" y="0" width="4.400" height="1.800" fill="#282828"/></g>
<g id="icEye"><path d="M-6.800 0c3-5 10.600-5 13.600 0c-3 5-10.600 5-13.600 0z" fill="#ececec"/><circle r="2.700" fill="#282828"/><circle r="1.200" fill="#ececec"/></g>
<g id="icCam"><path d="M-6.500-3.800h2.300l1.200-1.800h6l1.200 1.800h2.300v9.300h-13z" fill="#ececec"/><circle cy=".800" r="3.600" fill="#282828"/><circle cy=".800" r="2.500" fill="none" stroke="#ececec" stroke-width="1.100"/><circle cy=".800" r=".800" fill="#ececec"/></g>
<g id="icMesh"><path d="M-6.500-6h13l-6.500 12z" fill="none" stroke="#e08b45" stroke-width="2.900" stroke-linejoin="round"/></g>
<g id="icMeshData" fill="none" stroke="#17c59d" stroke-width="1.100"><path d="M-5.200-5.200h10.400l-5.200 10.400z"/><rect x="-7" y="-7" width="3.400" height="3.400" fill="#282828"/><rect x="3.600" y="-7" width="3.400" height="3.400" fill="#282828"/><rect x="-1.700" y="3.800" width="3.400" height="3.400" fill="#282828"/></g>
<path id="icTri" d="M-2.500-3.300l5.500 3.300-5.500 3.300z"/>
</defs>
<use href="#icColl" x="1267.300" y="129.500"/>
<path d="M1264 146.800h7l-3.500 6z" fill="#e4e4e4"/>
<rect x="1277.500" y="140" width="19.500" height="18.500" rx="4" fill="#5b5b5b" stroke="#6d6d6d" stroke-width=".800"/>
<use href="#icColl" x="1287.300" y="149.500"/>
<g fill="#777"><use href="#icTri" x="1287" y="169.500"/></g>
<g fill="#e0e0e0"><use href="#icTri" x="1287" y="189.500"/><use href="#icTri" x="1287" y="209.500"/><use href="#icTri" x="1287" y="229.500"/><use href="#icTri" x="1287" y="249.500"/></g>
<!-- camera object icon -->
<g transform="translate(1307.300 169.500)" fill="#9a6a44"><circle cx="-3.600" cy="-3.300" r="2.900"/><circle cx="2.600" cy="-3.800" r="3.500"/><rect x="-6" y="0" width="10" height="6" rx="1"/><path d="M4.500 2.800l3-2v5l-3-2z"/><circle cx="2.600" cy="-3.800" r="1.200" fill="#282828"/><circle cx="-3.600" cy="-3.300" r=".900" fill="#282828"/></g>
<use href="#icMesh" x="1307.300" y="189.500"/>
<use href="#icMesh" x="1307.300" y="209.500"/>
<!-- light object icon -->
<g transform="translate(1307.300 229.500)"><path d="M0-7.500a5.800 5.800 0 0 1 3.600 10.300v1.400h-7.200v-1.400a5.800 5.800 0 0 1 3.600-10.300z" fill="#e08b45"/><path d="M-2.800 5.600h5.600M-1.800 7.400h3.600" stroke="#e08b45" stroke-width="1.100"/><path d="M-2.600-1.200l1.300 2.400h2.600l1.300-2.400" fill="none" stroke="#282828" stroke-width=".900"/></g>
<rect x="1297.500" y="240" width="19.500" height="18.500" rx="4" fill="#6f7f9f" stroke="#8694b0" stroke-width=".800"/>
<use href="#icMesh" x="1307.300" y="249.500"/>
<!-- data icons -->
<rect x="1383.800" y="160" width="19.500" height="18.500" rx="4" fill="#555" stroke="#666" stroke-width=".800"/>
<g transform="translate(1393.500 169.500)" fill="none" stroke="#1e9f85" stroke-width="1.100"><circle cx="-3.400" cy="-2.800" r="2.300"/><circle cx="2.400" cy="-3.400" r="3"/><rect x="-5.500" y="1" width="9" height="5" rx="1"/><path d="M4 3l3-1.800v4.600l-3-1.800z"/></g>
<g transform="translate(1382.800 189.500)" fill="none" stroke="#5b7fd6" stroke-width="1.300" stroke-linecap="round" stroke-linejoin="round"><path d="M-6 5.200l5.800-5.800a3.800 3.800 0 0 1 4.600-5l-2.400 2.400.600 2 2 .600 2.400-2.400a3.800 3.800 0 0 1-5 4.600l-5.800 5.800a1.500 1.500 0 0 1-2.200-2.200z"/></g>
<use href="#icMeshData" x="1403" y="189.500"/>
<use href="#icMeshData" x="1376.600" y="209.500"/>
<g transform="translate(1377 229.500)" fill="none" stroke="#17c59d" stroke-width="1.100"><circle cy="-.800" r="6"/><path d="M0 0v4"/><circle cy="-.800" r="1" fill="#17c59d"/><path d="M-1.500 6.800h3" stroke-dasharray="1 1"/></g>
<use href="#icMeshData" x="1380.800" y="249.500"/>
<!-- right toggles -->
<rect x="1432" y="144" width="11" height="11" rx="1.500" fill="#f0f0f0"/><path d="M1434.200 149.500l2.500 2.600 4.200-5" fill="none" stroke="#222" stroke-width="1.600"/>
<use href="#icEye" x="1457.800" y="149"/><use href="#icCam" x="1478" y="149"/>
<path d="M1451.500 167.500c3 4.200 9.600 4.200 12.600 0" fill="none" stroke="#b8b8b8" stroke-width="1.100"/><use href="#icCam" x="1478" y="169"/>
<use href="#icEye" x="1457.800" y="189"/><use href="#icCam" x="1478" y="189"/>
<use href="#icEye" x="1457.800" y="209"/><use href="#icCam" x="1478" y="209"/>
<use href="#icEye" x="1457.800" y="229"/><use href="#icCam" x="1478" y="229"/>
<use href="#icEye" x="1457.800" y="249"/><use href="#icCam" x="1478" y="249"/>
</svg>
</div></div>
<!--PROPERTIES-->
<div class="area" style="left:1238px;top:332px;width:258px;height:498.500px;background:#303030">
<div style="position:absolute;left:-1238px;top:-332px;width:1552px;height:926px">
<div style="position:absolute;left:1238px;top:357px;width:28px;height:474px;background:#1f1f1f"></div>
<div style="position:absolute;left:1273.500px;top:342.500px;width:215px;height:22.700px;background:#3d3d3d;border-radius:4px"></div>
<div style="position:absolute;left:1293.500px;top:349px;width:11px;height:11px;background:#545454;border-radius:2px"></div>
<div class="t" style="left:1307.500px;top:355.500px">Bloom</div>
<div style="position:absolute;left:1273.500px;top:367.3px;width:215px;height:22.7px;background:#3d3d3d;border-radius:4px"></div>
<div class="t" style="left:1293.500px;top:378.7px">Depth of Field</div>
<div style="position:absolute;left:1273.500px;top:392.1px;width:215px;height:22.7px;background:#3d3d3d;border-radius:4px"></div>
<div class="t" style="left:1293.500px;top:403.5px">Subsurface Scattering</div>
<div style="position:absolute;left:1273.500px;top:416.9px;width:215px;height:22.7px;background:#3d3d3d;border-radius:4px"></div>
<div style="position:absolute;left:1293.500px;top:422.6px;width:11px;height:11px;background:#545454;border-radius:2px"></div>
<div class="t" style="left:1307.500px;top:428.2px">Screen Space Reflections</div>
<div style="position:absolute;left:1273.500px;top:441.8px;width:215px;height:22.7px;background:#3d3d3d;border-radius:4px"></div>
<div style="position:absolute;left:1293.500px;top:447.5px;width:11px;height:11px;background:#545454;border-radius:2px"></div>
<div class="t" style="left:1307.500px;top:453.2px">Motion Blur</div>
<div style="position:absolute;left:1273.500px;top:466.6px;width:215px;height:22.7px;background:#3d3d3d;border-radius:4px"></div>
<div class="t" style="left:1293.500px;top:478.0px">Volumetrics</div>
<div style="position:absolute;left:1273.500px;top:491.5px;width:215px;height:22.7px;background:#3d3d3d;border-radius:4px"></div>
<div class="t" style="left:1293.500px;top:502.9px">Performance</div>
<div style="position:absolute;left:1273.500px;top:516.3px;width:215px;height:22.7px;background:#3d3d3d;border-radius:4px"></div>
<div class="t" style="left:1293.500px;top:527.6px">Hair</div>
<div style="position:absolute;left:1273.500px;top:682.1px;width:215px;height:22.7px;background:#3d3d3d;border-radius:4px"></div>
<div class="t" style="left:1293.500px;top:693.5px">Indirect Lighting</div>
<div style="position:absolute;left:1273.500px;top:706.9px;width:215px;height:22.7px;background:#3d3d3d;border-radius:4px"></div>
<div class="t" style="left:1293.500px;top:718.2px">Film</div>
<div style="position:absolute;left:1273.500px;top:731.8px;width:215px;height:22.7px;background:#3d3d3d;border-radius:4px"></div>
<div style="position:absolute;left:1293.500px;top:737.4px;width:11px;height:11px;background:#545454;border-radius:2px"></div>
<div class="t" style="left:1307.500px;top:743.1px">Simplify</div>
<div style="position:absolute;left:1273.500px;top:756.6px;width:215px;height:22.7px;background:#3d3d3d;border-radius:4px"></div>
<div class="t" style="left:1293.500px;top:768.0px">Grease Pencil</div>
<div style="position:absolute;left:1273.500px;top:781.4px;width:215px;height:22.7px;background:#3d3d3d;border-radius:4px"></div>
<div style="position:absolute;left:1293.500px;top:787.0px;width:11px;height:11px;background:#545454;border-radius:2px"></div>
<div class="t" style="left:1307.500px;top:792.8px">Freestyle</div>
<div style="position:absolute;left:1273.500px;top:806.3px;width:215px;height:22.7px;background:#3d3d3d;border-radius:4px"></div>
<div class="t" style="left:1293.500px;top:817.6px">Color Management</div>
<div style="position:absolute;left:1273.500px;top:541.200px;width:215px;height:138px;background:#383838;border-radius:4px;overflow:hidden"><div style="position:absolute;left:0;top:0;width:215px;height:23px;background:#3d3d3d"></div></div>
<div class="t" style="left:1293.500px;top:552.800px">Shadows</div>
<div class="t" style="left:1249px;width:100px;text-align:right;top:581.300px">Cube Size</div>
<div class="t" style="left:1249px;width:100px;text-align:right;top:601.800px">Cascade Si…</div>
<div class="t" style="left:1249px;width:100px;text-align:right;top:662.600px">Light Thres…</div>
<div style="position:absolute;left:1358.500px;top:573px;width:103px;height:17px;background:#282828;border-radius:3.500px;box-shadow:0 0 0 .8px #454545"></div>
<div class="t" style="left:1365px;top:581.300px">4096 px</div>
<div style="position:absolute;left:1358.500px;top:593.300px;width:103px;height:16.500px;background:#282828;border-radius:3.500px;box-shadow:0 0 0 .8px #454545"></div>
<div class="t" style="left:1365px;top:601.800px">1024 px</div>
<div style="position:absolute;left:1358.500px;top:616.500px;width:11.500px;height:11.500px;background:#545454;border-radius:2.500px"></div>
<div class="t" style="left:1374.300px;top:622px">High Bit Depth</div>
<div style="position:absolute;left:1358.500px;top:637px;width:11.500px;height:11.500px;background:#4772b3;border-radius:2.500px"></div>
<div class="t" style="left:1374.300px;top:642.500px">Soft Shadows</div>
<div style="position:absolute;left:1358.500px;top:655px;width:103px;height:16.500px;background:#545454;border-radius:3.500px"></div>
<div class="t" style="left:1358.500px;width:103px;text-align:center;top:662.800px">0.010</div>
<div style="position:absolute;left:1238px;top:332px;width:258px;height:25px;background:#303030"></div>
<div style="position:absolute;left:1238px;top:400px;width:28px;height:27.500px;background:#303030;border-radius:4px 0 0 4px"></div>
<div class="btn" style="left:1246.500px;top:334.500px;width:30.500px;height:19px"></div>
<svg style="left:1249px;top:336.500px" width="28" height="15" viewBox="0 0 28 15"><rect x="1" y="1" width="12.500" height="5.600" rx="2.800" fill="#e6e6e6"/><rect x="7.200" y="2.200" width="5.200" height="3.200" rx="1.600" fill="#282828"/><rect x="1" y="8.200" width="12.500" height="5.600" rx="2.800" fill="#e6e6e6"/><rect x="8.600" y="9.400" width="3.800" height="3.200" rx="1.600" fill="#282828"/><path d="M18.500 6l2.700 2.600L23.900 6" class="ic" stroke-width="1.300"/></svg>
<div class="btn" style="left:1305.500px;top:334.500px;width:116px;height:19px;background:#1d1d1d"></div>
<svg style="left:1309.500px;top:336.500px" width="15" height="15" viewBox="0 0 15 15"><circle cx="8.800" cy="5.800" r="4.200" class="ic" stroke-width="1.200"/><path d="M5.800 8.800L1.500 13.200" class="ic" stroke-width="1.400"/></svg>
<div class="btn" style="left:1469px;top:334.500px;width:18.500px;height:19px;background:#2d2d2d"></div>
<svg style="left:1474.500px;top:342px" width="8" height="5" viewBox="0 0 8 5"><path d="M1 1l2.700 2.600L6.400 1" class="ic" stroke-width="1.300"/></svg>
<svg style="left:0;top:0" width="1552" height="926" viewBox="0 0 1552 926">
<g fill="none" stroke="#c8c8c8" stroke-width="1.100" stroke-linecap="round" stroke-linejoin="round">
<path d="M1283.700 375.2l3.400 3.500-3.400 3.500"/><path d="M1283.700 400.0l3.400 3.500-3.400 3.500"/><path d="M1283.700 424.8l3.400 3.500-3.400 3.500"/><path d="M1283.700 449.7l3.400 3.500-3.400 3.500"/><path d="M1283.700 474.5l3.400 3.500-3.400 3.500"/><path d="M1283.700 499.4l3.400 3.500-3.400 3.500"/><path d="M1283.700 524.1l3.400 3.500-3.400 3.500"/><path d="M1283.700 690.0l3.400 3.500-3.400 3.500"/><path d="M1283.700 714.8l3.400 3.500-3.400 3.500"/><path d="M1283.700 739.6l3.400 3.500-3.400 3.500"/><path d="M1283.700 764.5l3.400 3.500-3.400 3.500"/><path d="M1283.700 789.2l3.400 3.500-3.400 3.500"/><path d="M1283.700 814.1l3.400 3.500-3.400 3.500"/><path d="M1281.800 551.300l3.500 3.400 3.500-3.400"/></g>
<g stroke="#565656" stroke-width="1">
<path d="M1472 377.4h8M1472 379.9h8"/><path d="M1472 402.2h8M1472 404.7h8"/><path d="M1472 426.9h8M1472 429.4h8"/><path d="M1472 451.9h8M1472 454.4h8"/><path d="M1472 476.7h8M1472 479.2h8"/><path d="M1472 501.6h8M1472 504.1h8"/><path d="M1472 526.4h8M1472 528.9h8"/><path d="M1472 692.2h8M1472 694.7h8"/><path d="M1472 717.0h8M1472 719.5h8"/><path d="M1472 741.9h8M1472 744.4h8"/><path d="M1472 766.7h8M1472 769.2h8"/><path d="M1472 791.5h8M1472 794.0h8"/><path d="M1472 816.4h8M1472 818.9h8"/><path d="M1472 551.3h8M1472 553.8h8"/></g>
<path d="M1451.800 579.800l2.600 2.500 2.600-2.500M1451.800 600.300l2.600 2.500 2.600-2.500" class="ic" stroke-width="1.200"/>
<path d="M1361.300 643l2.300 2.400 4-5" fill="none" stroke="#fff" stroke-width="1.500"/>
<g transform="translate(1252.700 379)"><path d="M-4.500-6v5.500" stroke="#e0e0e0" stroke-width="1.200"/><ellipse cx="-4.500" cy="3.600" rx="2.300" ry="3.200" fill="#e0e0e0"/><path d="M1-6.200v3.400a2 2 0 0 0 1.400 1.900v6.400a1.100 1.100 0 0 0 2.200 0v-6.400a2 2 0 0 0 1.400-1.900v-3.400" fill="none" stroke="#e0e0e0" stroke-width="1.600"/></g>
<g transform="translate(1252.700 413.700)"><path d="M-7-3.500h14v10h-14z" fill="#e6e6e6"/><path d="M-4-3.500l1.200-2.200h4.600l1.200 2.200zM4.300-3.500v-1.500h2v1.500z" fill="#e6e6e6"/><path d="M-5.200-1.300h7M-5.200 1.300h7M-5.200 3.900h7" stroke="#303030" stroke-width="1.300"/><path d="M3.800-1.900h2v2h-2zM3.800 2.200h2v2h-2z" fill="#303030"/></g>
<g transform="translate(1252.700 442)"><path d="M-7-6.500h14v5h-2v-2.500h-10v2.500h-2z" fill="#e0e0e0"/><rect x="-4.500" y="-2" width="9" height="9" fill="none" stroke="#e0e0e0" stroke-width="1.100"/><path d="M-3.500 6l3-4 1.800 2.200 1-1.200 1.400 3z" fill="#e0e0e0"/></g>
<g transform="translate(1252.700 470)"><path d="M-6.800-2.500v9.300h9.400" fill="none" stroke="#7a7a7a" stroke-width="1.100"/><path d="M-5.200-4.200v9.300h9.400" fill="none" stroke="#a8a8a8" stroke-width="1.100"/><rect x="-3.400" y="-6.500" width="10" height="10" rx="1" fill="none" stroke="#e0e0e0" stroke-width="1.100"/><path d="M-2.400 2.500l3.200-5 2 3 1-1.200 1.600 3.200z" fill="#e0e0e0"/><circle cx="4.300" cy="-4" r=".800" fill="#e0e0e0"/></g>
<g transform="translate(1252.700 498)"><path d="M-3.200-6.300L-.500 4H-7z" fill="#e0e0e0"/><circle cx="4.200" cy="-5" r="1.700" fill="#e0e0e0"/><circle cx="2.300" cy="3.200" r="3.400" fill="#1f1f1f" stroke="#e0e0e0" stroke-width="1.100"/></g>
<g transform="translate(1252.700 527)"><circle r="6.300" fill="none" stroke="#d2607a" stroke-width="1.300"/><path d="M-4.500-3.500c2-1 3.500-.500 4 .800s-1 2-2.200 2.700-1 2.500-.300 3.500M2-5.500c.500 1.500 2 1.500 3.500 2M1.500 1.500c1.500-.800 3 0 3.200 1.300" fill="none" stroke="#d2607a" stroke-width="1.300"/></g>
<g transform="translate(1252.700 563)"><rect x="-7" y="-6.500" width="14" height="4" fill="none" stroke="#e4e4e4" stroke-width="1.100"/><path d="M-5.800-2.500v9h11.600v-9" fill="none" stroke="#e4e4e4" stroke-width="1.100"/><rect x="-2.200" y="0" width="4.400" height="1.800" fill="#e4e4e4"/></g>
<g transform="translate(1252.700 598.500)"><rect x="-3.800" y="-3.800" width="7.600" height="7.600" fill="#e08b45"/><path d="M-6.800-3.500v-2.300a1 1 0 0 1 1-1h2.300M3.500-6.800h2.300a1 1 0 0 1 1 1v2.300M6.800 3.500v2.300a1 1 0 0 1-1 1h-2.300M-3.500 6.800h-2.300a1 1 0 0 1-1-1v-2.300" fill="none" stroke="#e08b45" stroke-width="1.100"/></g>
<g transform="translate(1252.700 627)" fill="#5b8be0"><path d="M-6.800 5.200l5.600-5.600a4 4 0 0 1 5-5.200l-2.500 2.500.600 2.200 2.200.600 2.500-2.500a4 4 0 0 1-5.200 5l-5.600 5.600a1.800 1.800 0 0 1-2.600-2.600z"/></g>
<g transform="translate(1252.700 655)" fill="none" stroke="#5b8be0" stroke-width="1.100"><path d="M-4.500-5v10M-4.500-5h9M-4.500-5l9 9.500"/><circle cx="-4.500" cy="-5" r="2" fill="#5b8be0"/><circle cx="5.500" cy="-5" r="1.300" fill="#5b8be0"/><circle cx="-4.500" cy="6" r="1.300" fill="#5b8be0"/><circle cx="5.200" cy="5.200" r="1.300" fill="#5b8be0"/></g>
<g transform="translate(1252.700 683)" fill="none" stroke="#5b8be0"><path d="M3.500-5.500a6.300 6.300 0 1 0 3 7" stroke-width="1.300"/><circle cx="-.300" r="2.400" fill="#5b8be0" stroke="none"/><circle cx="5.500" cy="-4.200" r="1.400" fill="#5b8be0" stroke="none"/></g>
<g transform="translate(1252.700 711)" fill="none" stroke="#5b8be0" stroke-width="1.300"><path d="M-6.500 3.500a4 4 0 0 1 1.500-5.500l6-3.800a3.800 3.800 0 0 1 5 5.600l-4.500 6.200a4.200 4.200 0 0 1-8-2.500z"/><circle cx="-2.500" cy="2.800" r="1.700"/><circle cx="3.800" cy="-3.300" r=".800" fill="#5b8be0"/></g>
<g transform="translate(1252.700 739.500)" fill="none" stroke="#17c59d" stroke-width="1.200"><path d="M-5.200-5.200h10.400l-5.200 10.400z"/><rect x="-7" y="-7" width="3.400" height="3.400" fill="#1f1f1f"/><rect x="3.600" y="-7" width="3.400" height="3.400" fill="#1f1f1f"/><rect x="-1.700" y="3.800" width="3.400" height="3.400" fill="#1f1f1f"/></g>
<g transform="translate(1252.700 767.500)"><circle r="6.500" fill="#d2607a"/><path d="M0 0v-6.500a6.500 6.500 0 0 0-6.500 6.500zM0 0h6.500a6.500 6.500 0 0 1-6.500 6.500z" fill="#1f1f1f"/><circle r="6.500" fill="none" stroke="#d2607a" stroke-width="1.200"/></g>
<g transform="translate(1245.700 795.500)" fill="#d2607a"><rect x="0.0" y="0.0" width="3.500" height="3.500"/><rect x="7.0" y="0.0" width="3.500" height="3.500"/><rect x="3.5" y="3.5" width="3.500" height="3.500"/><rect x="10.5" y="3.5" width="3.500" height="3.500"/><rect x="0.0" y="7.0" width="3.500" height="3.500"/><rect x="7.0" y="7.0" width="3.500" height="3.500"/><rect x="3.5" y="10.5" width="3.500" height="3.500"/><rect x="10.5" y="10.5" width="3.500" height="3.500"/></g>
</svg>
</div></div>
<!--TIMELINE-->
<div class="area" style="left:57px;top:713px;width:1178px;height:117.500px;background:#303030">
<div style="position:absolute;left:-57px;top:-713px;width:1552px;height:926px">
<div style="position:absolute;left:56px;top:713px;width:1180px;height:26px;background:#303030"></div>
<div style="position:absolute;left:56px;top:739px;width:1180px;height:92px;background:#232323"></div>
<div style="position:absolute;left:100px;top:739px;width:1091px;height:92px;background:#303030"></div>
<div style="position:absolute;left:56px;top:763.500px;width:1180px;height:15.500px;background:rgba(100,40,40,.34)"></div>
<div style="position:absolute;left:95.1px;top:761px;width:1px;height:70px;background:#1c1c1c"></div>
<div style="position:absolute;left:138.9px;top:761px;width:1px;height:70px;background:#2a2a2a"></div>
<div style="position:absolute;left:182.7px;top:761px;width:1px;height:70px;background:#262626"></div>
<div style="position:absolute;left:226.5px;top:761px;width:1px;height:70px;background:#2a2a2a"></div>
<div style="position:absolute;left:270.3px;top:761px;width:1px;height:70px;background:#262626"></div>
<div style="position:absolute;left:314.1px;top:761px;width:1px;height:70px;background:#2a2a2a"></div>
<div style="position:absolute;left:357.9px;top:761px;width:1px;height:70px;background:#262626"></div>
<div style="position:absolute;left:401.7px;top:761px;width:1px;height:70px;background:#2a2a2a"></div>
<div style="position:absolute;left:445.5px;top:761px;width:1px;height:70px;background:#262626"></div>
<div style="position:absolute;left:489.3px;top:761px;width:1px;height:70px;background:#2a2a2a"></div>
<div style="position:absolute;left:533.1px;top:761px;width:1px;height:70px;background:#262626"></div>
<div style="position:absolute;left:576.9px;top:761px;width:1px;height:70px;background:#2a2a2a"></div>
<div style="position:absolute;left:620.7px;top:761px;width:1px;height:70px;background:#262626"></div>
<div style="position:absolute;left:664.5px;top:761px;width:1px;height:70px;background:#2a2a2a"></div>
<div style="position:absolute;left:708.3px;top:761px;width:1px;height:70px;background:#262626"></div>
<div style="position:absolute;left:752.1px;top:761px;width:1px;height:70px;background:#2a2a2a"></div>
<div style="position:absolute;left:795.9px;top:761px;width:1px;height:70px;background:#262626"></div>
<div style="position:absolute;left:839.7px;top:761px;width:1px;height:70px;background:#2a2a2a"></div>
<div style="position:absolute;left:883.5px;top:761px;width:1px;height:70px;background:#262626"></div>
<div style="position:absolute;left:927.3px;top:761px;width:1px;height:70px;background:#2a2a2a"></div>
<div style="position:absolute;left:971.1px;top:761px;width:1px;height:70px;background:#262626"></div>
<div style="position:absolute;left:1014.9px;top:761px;width:1px;height:70px;background:#2a2a2a"></div>
<div style="position:absolute;left:1058.7px;top:761px;width:1px;height:70px;background:#262626"></div>
<div style="position:absolute;left:1102.5px;top:761px;width:1px;height:70px;background:#2a2a2a"></div>
<div style="position:absolute;left:1146.3px;top:761px;width:1px;height:70px;background:#262626"></div>
<div style="position:absolute;left:1190.1px;top:761px;width:1px;height:70px;background:#2a2a2a"></div>
<div style="position:absolute;left:1233.9px;top:761px;width:1px;height:70px;background:#1c1c1c"></div>
<div style="position:absolute;left:56px;top:739px;width:1180px;height:22.500px;background:#1e1e1e"></div>
<div class="t" style="left:163.2px;width:40px;text-align:center;top:750px;color:#c4c4c4">20</div>
<div class="t" style="left:250.8px;width:40px;text-align:center;top:750px;color:#c4c4c4">40</div>
<div class="t" style="left:338.4px;width:40px;text-align:center;top:750px;color:#c4c4c4">60</div>
<div class="t" style="left:426.0px;width:40px;text-align:center;top:750px;color:#c4c4c4">80</div>
<div class="t" style="left:513.6px;width:40px;text-align:center;top:750px;color:#c4c4c4">100</div>
<div class="t" style="left:601.2px;width:40px;text-align:center;top:750px;color:#c4c4c4">120</div>
<div class="t" style="left:688.8px;width:40px;text-align:center;top:750px;color:#c4c4c4">140</div>
<div class="t" style="left:776.4px;width:40px;text-align:center;top:750px;color:#c4c4c4">160</div>
<div class="t" style="left:864.0px;width:40px;text-align:center;top:750px;color:#c4c4c4">180</div>
<div class="t" style="left:951.6px;width:40px;text-align:center;top:750px;color:#c4c4c4">200</div>
<div class="t" style="left:1039.2px;width:40px;text-align:center;top:750px;color:#c4c4c4">220</div>
<div class="t" style="left:1126.8px;width:40px;text-align:center;top:750px;color:#c4c4c4">240</div>
<div style="position:absolute;left:99px;top:750px;width:2px;height:81px;background:#4772b3"></div>
<div style="position:absolute;left:64px;top:820px;width:1163px;height:8.500px;background:#555;border-radius:4.500px"></div>
<div style="position:absolute;left:66px;top:821.500px;width:5.500px;height:5.500px;background:#2a2a2a;border-radius:50%"></div>
<div style="position:absolute;left:1219.500px;top:821.500px;width:5.500px;height:5.500px;background:#2a2a2a;border-radius:50%"></div>
<div style="position:absolute;left:88px;top:741.500px;width:24px;height:17px;background:#4772b3;border-radius:3.500px"></div>
<div class="t" style="left:88px;width:24px;text-align:center;top:750px;color:#fff">1</div>
<div style="position:absolute;left:56px;top:753px;width:8px;height:15px;background:#2c2c2c;border-radius:0 3px 3px 0"></div>
<div style="position:absolute;left:1227px;top:753px;width:9px;height:15px;background:#2c2c2c;border-radius:3px 0 0 3px"></div>
<div class="btn" style="left:65px;top:717px;width:31px;height:18.500px"></div>
<div class="btn" style="left:102px;top:717px;width:128.500px;height:18.500px"></div>
<div class="t" style="left:126.500px;top:725.500px">Dope Sheet</div>
<div class="t" style="left:243.5px;top:725.500px">View</div>
<div class="t" style="left:284.0px;top:725.500px">Select</div>
<div class="t" style="left:331.5px;top:725.500px">Marker</div>
<div class="t" style="left:382.5px;top:725.500px">Channel</div>
<div class="t" style="left:441.5px;top:725.500px">Key</div>
<div style="position:absolute;left:950.500px;top:717px;width:57.500px;height:18.500px;border-radius:3.500px;overflow:hidden;background:#545454"><div style="position:absolute;left:0;top:0;width:18.500px;height:19px;background:#4772b3"></div><div style="position:absolute;left:18.500px;top:0;width:.800px;height:19px;background:#3d3d3d"></div><div style="position:absolute;left:37.500px;top:0;width:.800px;height:19px;background:#3d3d3d"></div></div>
<div class="btn" style="left:1015.500px;top:717px;width:30px;height:18.500px"></div>
<div class="btn" style="left:1052.500px;top:717px;width:117px;height:18.500px"></div>
<div class="t" style="left:1059.500px;top:725.500px">Nearest Frame</div>
<div class="btn" style="left:1175.500px;top:717px;width:51px;height:18.500px;overflow:hidden"><div style="position:absolute;left:1px;top:1px;width:18px;height:16.500px;background:#515151;border-radius:2.500px 0 0 2.500px"></div></div>
<svg style="left:0;top:0" width="1552" height="926" viewBox="0 0 1552 926">
<defs><g id="icDope" fill="#e6e6e6"><path d="M-6.500-3l2-2 2 2-2 2zM6.500-3l-2-2-2 2 2 2z"/><path d="M-2.200-4.800h4.400l-1.200 1.800 1.200 1.800h-4.400l1.200-1.800z"/><path d="M0 .800l2.800 2.800-2.800 2.800-2.800-2.800z" fill="none" stroke="#e6e6e6" stroke-width="1"/></g></defs>
<use href="#icDope" x="75" y="725.500"/><path d="M84.500 724.500l2.700 2.600 2.700-2.600" class="ic" stroke-width="1.300"/>
<use href="#icDope" x="113" y="725.500"/><path d="M218.500 724.500l2.700 2.600 2.700-2.600" class="ic" stroke-width="1.300"/>
<path d="M955.500 720.500l9 6-4 .800 2.300 4-1.800 1-2.300-4-2.900 2.800z" fill="#fff"/>
<rect x="972.500" y="720" width="12.500" height="12.500" fill="none" stroke="#e0e0e0" stroke-width="1" stroke-dasharray="2.500 1.800"/><rect x="975.700" y="723.200" width="6" height="6" fill="none" stroke="#e0e0e0" stroke-width=".800" stroke-dasharray="1.200 1"/>
<path d="M998 719.300l6.800 12.500h-13.600z" fill="#f0f0f0"/><path d="M998 723.500v4.300" stroke="#444" stroke-width="1.500"/><circle cx="998" cy="729.700" r=".900" fill="#444"/>
<path d="M1019.500 720h11l-4.200 5.500v5.800l-2.600-1.600v-4.200z" class="ic" stroke-width="1.200"/><path d="M1035.500 724.500l2.700 2.600 2.700-2.600" class="ic" stroke-width="1.300"/>
<path d="M1158.500 724.500l2.700 2.600 2.700-2.600" class="ic" stroke-width="1.300"/>
<circle cx="1185" cy="726.300" r="5" fill="none" stroke="#9c9c9c" stroke-width="1.100"/><circle cx="1185" cy="726.300" r="1.700" fill="#c8c8c8"/>
<path d="M1198.500 731.500c3.500 0 3-10.500 6-10.500s2.500 10.500 6 10.500" fill="none" stroke="#b4b4b4" stroke-width="1.200"/><path d="M1216.500 725.200l2.400 2.300 2.400-2.300" fill="none" stroke="#555" stroke-width="1.200"/>
<path d="M57.500 757.500l3 3-3 3M1234 757.500l-3 3 3 3" fill="none" stroke="#aaa" stroke-width="1"/>
</svg>
</div></div>
<!--STATUSBAR-->
<div style="position:absolute;left:56px;top:831px;width:1440px;height:21px;background:#1c1c1c"></div>
<div class="t" style="left:90px;top:841.500px;color:#a4a4a4">Pan View</div>
<div class="t" style="left:173.500px;top:841.500px;color:#a4a4a4">Box Select</div>
<div class="t" style="left:334.500px;top:841.500px;color:#a4a4a4">Dolly View</div>
<div class="t" style="left:579px;top:841.500px;color:#a4a4a4">Lasso Select</div>
<div class="t" style="left:1387px;width:100px;text-align:right;top:841.500px;color:#999">3.0.0</div>
<svg style="left:0;top:0" width="1552" height="926" viewBox="0 0 1552 926">
<g fill="none" stroke="#8e8e8e" stroke-width="1.100">
<rect x="68" y="835" width="9.500" height="14.300" rx="3.200"/><path d="M68.500 841.500v-3.500a2.500 2.500 0 0 1 2.500-2.500h1.700v6z" fill="#a0a0a0"/>
<rect x="149.500" y="835" width="9.500" height="14.300" rx="3.200"/><path d="M150 841.500v-3.500a2.500 2.500 0 0 1 2.500-2.500h1.700v6z" fill="#a0a0a0"/><path d="M161.500 836v5M163.800 837v3" stroke="#8e8e8e"/>
<rect x="313" y="835" width="9.500" height="14.300" rx="3.200"/><rect x="316.500" y="837" width="2.500" height="5" rx="1" fill="#a0a0a0"/>
<rect x="556" y="835" width="9.500" height="14.300" rx="3.200"/><path d="M561 841.500v-6h1.700a2.500 2.500 0 0 1 2.500 2.500v3.500z" fill="#a0a0a0" transform="translate(-4.500 0)"/><path d="M568 836v5M570.300 837v3" stroke="#8e8e8e"/>
</g></svg>
</div></div>
<!--ANNOTATION-->
<svg style="left:0;top:0" width="1552" height="926" viewBox="0 0 1552 926">
  <g fill="#ea4a2d" font-family="'Liberation Sans',sans-serif" font-size="17">
    <text x="901.5" y="403.7">Changing “Cube Size” to a higher value</text>
    <text x="901.5" y="424">will improve the way shadows look</text>
  </g>
  <g stroke="#ea4a2d" stroke-width="2" fill="none">
    <line x1="1003.5" y1="441" x2="964" y2="480"/>
    <line x1="1012.5" y1="440.5" x2="1234" y2="544.5"/>
    <rect x="1274.5" y="541.5" width="216" height="54"/>
  </g>
  <path d="M957.5 486l5-13.5 8.5 8.5z" fill="#ea4a2d"/>
  <path d="M1244 549l-14.5-.5 5-11z" fill="#ea4a2d"/>
</svg>
</body>
</html>
